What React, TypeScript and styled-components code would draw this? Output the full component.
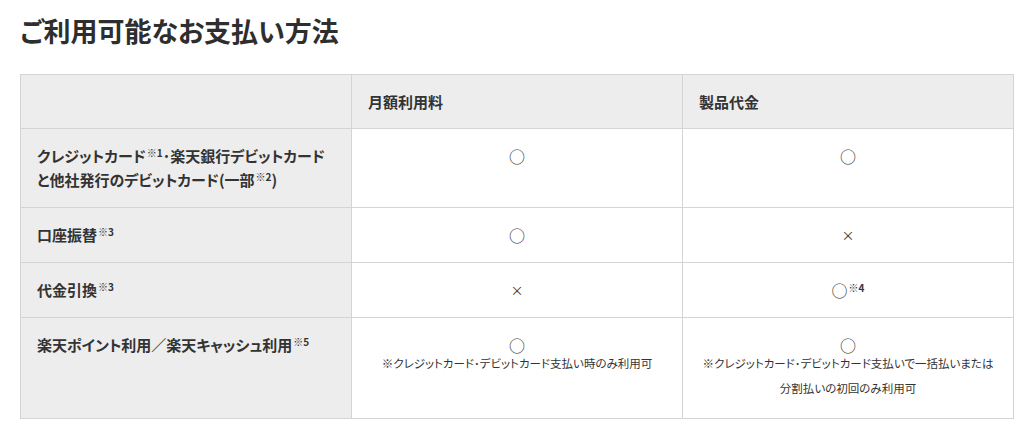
import React from "react";
import styled, { createGlobalStyle } from "styled-components";

const GlobalStyle = createGlobalStyle`
  html, body {
    margin: 0;
    padding: 0;
    background: #ffffff;
  }
  body {
    font-family: "Noto Sans CJK JP", "Noto Sans", sans-serif;
    color: #333333;
  }
`;

const Page = styled.div`
  padding: 11px 10px 0 20px;
`;

const Title = styled.h2`
  margin: 0 0 23px;
  font-size: 27px;
  line-height: 40px;
  font-weight: 700;
  color: #2e2e2e;
  font-feature-settings: "palt";
`;

const Table = styled.table`
  width: 994px;
  border-collapse: collapse;
  table-layout: fixed;
  font-feature-settings: "palt";
`;

const HeadCell = styled.th`
  background: #ededed;
  border: 1px solid #d4d4d4;
  padding: 15px 16px;
  height: 23px;
  text-align: left;
  font-size: 15px;
  line-height: 23px;
  font-weight: 700;
  color: #333333;
`;

const RowHead = styled.th`
  background: #ededed;
  border: 1px solid #d4d4d4;
  padding: 15px 16px;
  text-align: left;
  vertical-align: top;
  font-size: 15px;
  line-height: 24px;
  font-weight: 700;
  color: #333333;
`;

const Cell = styled.td`
  background: #ffffff;
  border: 1px solid #d4d4d4;
  padding: 15px 16px 14px;
  text-align: center;
  vertical-align: top;
  font-size: 15px;
  line-height: 24px;
  color: #333333;
`;

const Mark = styled.div<{ $kind: "ok" | "ng" }>`
  display: block;
  height: 24px;
  font-size: ${(p) => (p.$kind === "ok" ? "16px" : "13px")};
  line-height: 24px;
  color: #333333;
`;

const Sup = styled.sup`
  font-size: 10px;
  line-height: 0;
  vertical-align: 5px;
  font-weight: 700;
  margin-left: 1px;
  color: #333333;
`;

const Note = styled.div`
  margin: -6px 0 3px;
  font-size: 11.5px;
  line-height: 25px;
  color: #333333;
`;

type Value = { mark: "ok" | "ng"; sup?: string; note?: React.ReactNode };

const rows: { label: React.ReactNode; monthly: Value; product: Value }[] = [
  {
    label: (
      <>
        クレジットカード<Sup>※1</Sup>･楽天銀行デビットカード
        <br />
        と他社発行のデビットカード(一部<Sup>※2</Sup>)
      </>
    ),
    monthly: { mark: "ok" },
    product: { mark: "ok" },
  },
  {
    label: (
      <>
        口座振替<Sup>※3</Sup>
      </>
    ),
    monthly: { mark: "ok" },
    product: { mark: "ng" },
  },
  {
    label: (
      <>
        代金引換<Sup>※3</Sup>
      </>
    ),
    monthly: { mark: "ng" },
    product: { mark: "ok", sup: "※4" },
  },
  {
    label: (
      <>
        楽天ポイント利用／楽天キャッシュ利用<Sup>※5</Sup>
      </>
    ),
    monthly: { mark: "ok", note: "※クレジットカード･デビットカード支払い時のみ利用可" },
    product: {
      mark: "ok",
      note: (
        <>
          ※クレジットカード･デビットカード支払いで一括払いまたは
          <br />
          分割払いの初回のみ利用可
        </>
      ),
    },
  },
];

function ValueCell({ value }: { value: Value }) {
  return (
    <Cell>
      <Mark $kind={value.mark}>
        {value.mark === "ok" ? "○" : "×"}
        {value.sup && <Sup>{value.sup}</Sup>}
      </Mark>
      {value.note && <Note>{value.note}</Note>}
    </Cell>
  );
}

export default function App() {
  return (
    <>
      <GlobalStyle />
      <Page>
        <Title>ご利用可能なお支払い方法</Title>
        <Table>
          <thead>
            <tr>
              <HeadCell />
              <HeadCell>月額利用料</HeadCell>
              <HeadCell>製品代金</HeadCell>
            </tr>
          </thead>
          <tbody>
            {rows.map((r, i) => (
              <tr key={i}>
                <RowHead>{r.label}</RowHead>
                <ValueCell value={r.monthly} />
                <ValueCell value={r.product} />
              </tr>
            ))}
          </tbody>
        </Table>
      </Page>
    </>
  );
}
